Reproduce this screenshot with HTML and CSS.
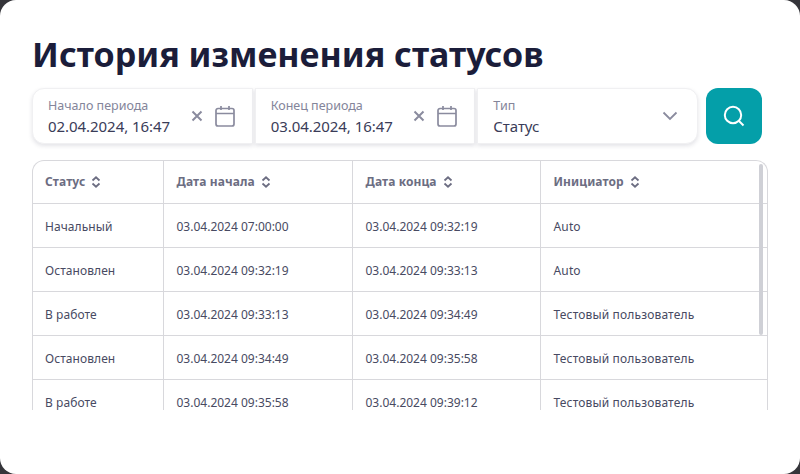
FILE: index.html
```html
<!DOCTYPE html>
<html lang="ru">
<head>
<meta charset="utf-8">
<title>История изменения статусов</title>
<link rel="stylesheet" href="styles.css">
</head>
<body>
<main class="modal">
  <h1 class="title">История изменения статусов</h1>
  <div class="filters">
    <div class="field field-first">
      <div class="field-text"><span class="label">Начало периода</span><span class="value">02.04.2024, 16:47</span></div>
      <svg class="icon-x" viewBox="0 0 12 12"><path d="M1.500 1.500l9 9M10.500 1.500l-9 9"/></svg>
      <svg class="icon-cal" viewBox="0 0 20 22"><path d="M3 3.500h14a2 2 0 0 1 2 2v13.500a2 2 0 0 1-2 2H3a2 2 0 0 1-2-2V5.500a2 2 0 0 1 2-2zM1 8.500h18M6 1v4M14 1v4"/></svg>
    </div>
    <div class="field">
      <div class="field-text"><span class="label">Конец периода</span><span class="value">03.04.2024, 16:47</span></div>
      <svg class="icon-x" viewBox="0 0 12 12"><path d="M1.500 1.500l9 9M10.500 1.500l-9 9"/></svg>
      <svg class="icon-cal" viewBox="0 0 20 22"><path d="M3 3.500h14a2 2 0 0 1 2 2v13.500a2 2 0 0 1-2 2H3a2 2 0 0 1-2-2V5.500a2 2 0 0 1 2-2zM1 8.500h18M6 1v4M14 1v4"/></svg>
    </div>
    <div class="field field-last">
      <div class="field-text"><span class="label">Тип</span><span class="value">Статус</span></div>
      <svg class="icon-chev" viewBox="0 0 16 10"><path d="M1.500 1.500L8 8l6.500-6.500"/></svg>
    </div>
    <button class="search" type="button" aria-label="Поиск">
      <svg viewBox="0 0 22 22"><circle cx="10" cy="10" r="8.200"/><path d="M16 16l4.500 4.500"/></svg>
    </button>
  </div>
  <div class="table-wrap">
    <table class="table">
      <colgroup><col class="c1"><col class="c2"><col class="c3"><col class="c4"></colgroup>
      <thead>
        <tr>
          <th>Статус<svg class="sort" viewBox="0 0 10 12"><path d="M1.500 4.500L5 1.300l3.500 3.200M1.500 7.500L5 10.700l3.500-3.200"/></svg></th>
          <th>Дата начала<svg class="sort" viewBox="0 0 10 12"><path d="M1.500 4.500L5 1.300l3.500 3.200M1.500 7.500L5 10.700l3.500-3.200"/></svg></th>
          <th>Дата конца<svg class="sort" viewBox="0 0 10 12"><path d="M1.500 4.500L5 1.300l3.500 3.200M1.500 7.500L5 10.700l3.500-3.200"/></svg></th>
          <th>Инициатор<svg class="sort" viewBox="0 0 10 12"><path d="M1.500 4.500L5 1.300l3.500 3.200M1.500 7.500L5 10.700l3.500-3.200"/></svg></th>
        </tr>
      </thead>
      <tbody>
        <tr><td>Начальный</td><td>03.04.2024 07:00:00</td><td>03.04.2024 09:32:19</td><td>Auto</td></tr>
        <tr><td>Остановлен</td><td>03.04.2024 09:32:19</td><td>03.04.2024 09:33:13</td><td>Auto</td></tr>
        <tr><td>В работе</td><td>03.04.2024 09:33:13</td><td>03.04.2024 09:34:49</td><td>Тестовый пользователь</td></tr>
        <tr><td>Остановлен</td><td>03.04.2024 09:34:49</td><td>03.04.2024 09:35:58</td><td>Тестовый пользователь</td></tr>
        <tr><td>В работе</td><td>03.04.2024 09:35:58</td><td>03.04.2024 09:39:12</td><td>Тестовый пользователь</td></tr>
      </tbody>
    </table>
    <div class="scrollbar"></div>
  </div>
</main>
</body>
</html>
```
FILE: styles.css
```css
* { box-sizing: border-box; }
html, body { margin: 0; height: 100%; background: #35353a; overflow: hidden; }
body { font-family: "Noto Sans", "Open Sans", sans-serif; color: #1d2040; }
.modal { width: 800px; height: 474px; background: #fff; border-radius: 16px; padding: 32px; }
.title { margin: 0 0 12px; font-size: 34px; line-height: 44px; font-weight: 700; color: #1b1d3a; }
.filters { display: flex; height: 56px; }
.field { display: flex; align-items: center; width: 220.670px; margin-right: 2px; padding: 0 15px; background: #fff; border: 1px solid #f0f0f2; box-shadow: 0 2px 4px rgba(40, 40, 70, .13); }
.field-first { border-radius: 12px 0 0 12px; }
.field-last { border-radius: 0 12px 12px 0; margin-right: 8px; }
.field-text { display: flex; flex-direction: column; flex: 1; padding-top: 2px; }
.label { font-size: 12.500px; line-height: 18px; color: #84859a; }
.value { font-size: 15px; line-height: 22px; color: #3a3c58; letter-spacing: -.05px; }
.icon-x { width: 12px; height: 12px; margin-right: 12px; fill: none; stroke: #8a8b9e; stroke-width: 2; }
.icon-cal { width: 20px; height: 22px; margin-right: 2px; fill: none; stroke: #8a8b9e; stroke-width: 1.700; }
.icon-chev { width: 16px; height: 10px; margin-right: 4px; fill: none; stroke: #8a8b9e; stroke-width: 1.800; }
.search { width: 56px; height: 56px; padding: 0; border: 0; border-radius: 12px; background: #049fa9; display: flex; align-items: center; justify-content: center; }
.search svg { width: 22px; height: 22px; fill: none; stroke: #fff; stroke-width: 2; }
.table-wrap { position: relative; margin-top: 16px; height: 250px; overflow: hidden; border: 1px solid #d8d8dc; border-bottom: 0; border-radius: 12px 12px 0 0; }
.table { width: 735px; table-layout: fixed; border-collapse: collapse; font-size: 12px; }
.c1 { width: 130px; }
.c2 { width: 189px; }
.c3 { width: 188px; }
th, td { height: 44px; padding: 2px 12px 0 13px; text-align: left; border-bottom: 1px solid #d8d8dc; border-right: 1px solid #d8d8dc; font-weight: 400; white-space: nowrap; }
td { color: #484a62; letter-spacing: .07px; }
td:nth-child(2), td:nth-child(3) { letter-spacing: 0; }
td:last-child { letter-spacing: .15px; }
th { height: 42px; padding-top: 0; font-weight: 700; color: #6c6d82; letter-spacing: .1px; }
th:first-child, td:first-child { padding-left: 12px; }
th:last-child, td:last-child { border-right: 0; }
.sort { width: 10px; height: 12px; margin-left: 6px; vertical-align: -2px; fill: none; stroke: #6c6d82; stroke-width: 1.800; }
.scrollbar { position: absolute; top: 3px; right: 4px; width: 4px; height: 171px; border-radius: 2px; background: #cfd0d6; }
```
